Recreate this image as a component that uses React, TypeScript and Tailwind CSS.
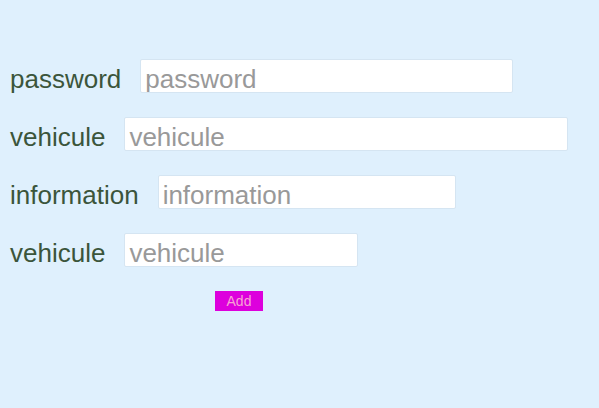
import React from "react";

const rows = [
  { label: "password", w: "w-[373px]" },
  { label: "vehicule", w: "w-[444px]" },
  { label: "information", w: "w-[298px]" },
  { label: "vehicule", w: "w-[234px]" },
];

export default function App() {
  return (
    <div
      className="w-[599px] h-[408px] bg-[#dff0fd] pt-[59px] pl-[10px]"
      style={{ fontFamily: '"Liberation Sans", Arial, sans-serif' }}
    >
      <div className="flex flex-col gap-[24px]">
        {rows.map((r, i) => (
          <div key={i} className="flex items-center h-[34px]">
            <span className="text-[26px] leading-none pt-[6px] text-[#3b553b] mr-[19px]">{r.label}</span>
            <input
              className={`${r.w} h-[34px] bg-white border border-[#d5e5f2] rounded-[2px] pl-[4px] pt-[6px] text-[26px] text-[#333] placeholder:text-[#999] outline-none`}
              placeholder={r.label}
            />
          </div>
        ))}
      </div>
      <div className="mt-[24px] pl-[205px]">
        <button className="w-[48px] h-[20px] bg-[#dd00dd] text-[#f7a3d3] text-[14px] leading-none flex items-center justify-center">
          Add
        </button>
      </div>
    </div>
  );
}
